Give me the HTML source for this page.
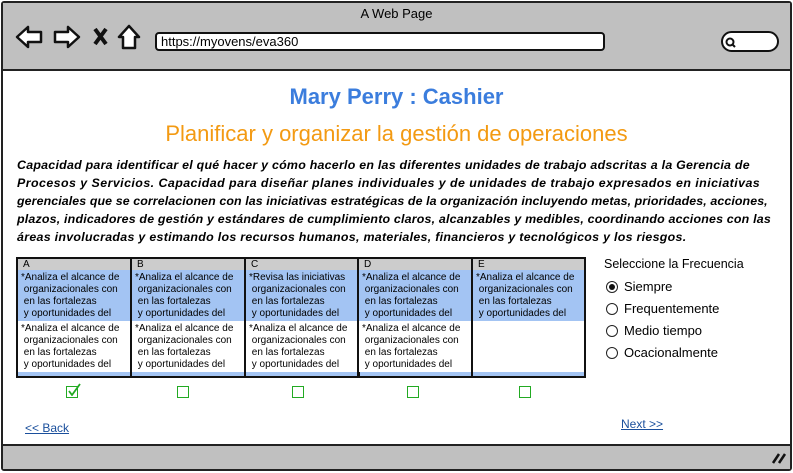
<!DOCTYPE html>
<html><head><meta charset="utf-8"><style>
*{margin:0;padding:0;box-sizing:border-box}
body{width:793px;height:473px;position:relative;background:#fff;font-family:"Liberation Sans",sans-serif;overflow:hidden}
.abs{position:absolute}
#frame{left:1px;top:1px;width:791px;height:470px;border:2px solid #222;border-radius:3px;background:#fff}
#top{left:3px;top:3px;width:787px;height:68px;background:#c0c0c0;border-bottom:2px solid #222}
#bot{left:3px;top:444px;width:787px;height:25px;background:#c0c0c0;border-top:2px solid #222}
.col{position:absolute;top:257px;height:121px;border:2px solid #111}
.hd{height:11px;background:#ccc;font-size:10px;padding-left:5px;line-height:11px}
.bl{background:#a3c4f3}
.cell{height:51px;font-size:10px;line-height:12px;padding:2px 0 0 3px;white-space:pre}
.cb{position:absolute;top:386px;width:12px;height:12px;border:1.5px solid #2a2}
.rad{position:absolute;left:606px;width:12px;height:12px;border:1.3px solid #222;border-radius:50%}
.rl{position:absolute;left:624px;font-size:13px}
.p div{white-space:nowrap;height:18px}
</style></head><body>
<div id="frame" class="abs"></div>
<div id="top" class="abs"></div>
<div class="abs" style="left:0;width:793px;top:6px;text-align:center;font-size:13px">A Web Page</div>
<svg class="abs" style="left:14px;top:22px" width="135" height="30" viewBox="0 0 135 30">
<path d="M3 15 L14 5 L14 10 L27 10 L27 20 L14 20 L14 25 Z" fill="#fff" stroke="#111" stroke-width="2.5" stroke-linejoin="round"/>
<path d="M65 15 L54 5 L54 10 L41 10 L41 20 L54 20 L54 25 Z" fill="#fff" stroke="#111" stroke-width="2.5" stroke-linejoin="round"/>
<path d="M81 7 L92 22 M92 7 L81 22" stroke="#111" stroke-width="4"/>
<path d="M115 4 L105 15 L109 15 L109 26 L121 26 L121 15 L125 15 Z" fill="#fff" stroke="#111" stroke-width="2.5" stroke-linejoin="round"/>
</svg>
<div class="abs" style="left:155px;top:32px;width:450px;height:19px;background:#fff;border:2px solid #111;border-radius:4px;font-size:13px;padding-left:4px;line-height:15px">https://myovens/eva360</div>
<div class="abs" style="left:721px;top:31px;width:58px;height:21px;background:#fff;border:2px solid #111;border-radius:11px"></div>
<svg class="abs" style="left:724px;top:36px" width="14" height="12"><circle cx="6" cy="6" r="3.5" fill="none" stroke="#111" stroke-width="2"/><path d="M8 8 L11 11" stroke="#111" stroke-width="2"/></svg>
<div class="abs" style="left:0;width:793px;top:84px;text-align:center;font-size:22px;font-weight:bold;color:#3b7ddd">Mary Perry : Cashier</div>
<div class="abs" style="left:0;width:793px;top:121px;text-align:center;font-size:22px;color:#f39a12">Planificar y organizar la gestión de operaciones</div>
<div class="abs p" style="left:17px;top:156px;width:770px;font-size:12.4px;font-weight:bold;font-style:italic;line-height:18px">
<div style="letter-spacing:0.25px">Capacidad para identificar el qué hacer y cómo hacerlo en las diferentes unidades de trabajo adscritas a la Gerencia de</div>
<div style="letter-spacing:0.45px">Procesos y Servicios. Capacidad para diseñar planes individuales y de unidades de trabajo expresados en iniciativas</div>
<div style="letter-spacing:0.1px">gerenciales que se correlacionen con las iniciativas estratégicas de la organización incluyendo metas, prioridades, acciones,</div>
<div style="letter-spacing:0.2px">plazos, indicadores de gestión y estándares de cumplimiento claros, alcanzables y medibles, coordinando acciones con las</div>
<div style="letter-spacing:0.3px">áreas involucradas y estimando los recursos humanos, materiales, financieros y tecnológicos y los riesgos.</div>
</div>
<div class="abs bl" style="left:16px;top:257px;width:570px;height:121px;border:2px solid #111"></div>
<div class="col" style="left:16px;width:116px"><div class="hd">A</div><div class="cell bl">*Analiza el alcance de
 organizacionales con
 en las fortalezas
 y oportunidades del</div><div class="cell" style="background:#fff">*Analiza el alcance de
 organizacionales con
 en las fortalezas
 y oportunidades del</div></div>
<div class="col" style="left:130px;width:116px"><div class="hd">B</div><div class="cell bl">*Analiza el alcance de
 organizacionales con
 en las fortalezas
 y oportunidades del</div><div class="cell" style="background:#fff">*Analiza el alcance de
 organizacionales con
 en las fortalezas
 y oportunidades del</div></div>
<div class="col" style="left:244px;width:116px"><div class="hd">C</div><div class="cell bl">*Revisa las iniciativas
 organizacionales con
 en las fortalezas
 y oportunidades del</div><div class="cell" style="background:#fff">*Analiza el alcance de
 organizacionales con
 en las fortalezas
 y oportunidades del</div></div>
<div class="col" style="left:357px;width:116px"><div class="hd">D</div><div class="cell bl">*Analiza el alcance de
 organizacionales con
 en las fortalezas
 y oportunidades del</div><div class="cell" style="background:#fff">*Analiza el alcance de
 organizacionales con
 en las fortalezas
 y oportunidades del</div></div>
<div class="col" style="left:471px;width:115px"><div class="hd">E</div><div class="cell bl">*Analiza el alcance de
 organizacionales con
 en las fortalezas
 y oportunidades del</div><div class="cell" style="background:#fff"></div></div>
<div class="cb" style="left:66px"></div>
<svg class="abs" style="left:66px;top:382px" width="16" height="14"><path d="M3 9 L6 13 L14 2" fill="none" stroke="#2a2" stroke-width="1.8"/></svg>
<div class="cb" style="left:177px"></div>
<div class="cb" style="left:292px"></div>
<div class="cb" style="left:407px"></div>
<div class="cb" style="left:519px"></div>
<div class="abs" style="left:604px;top:257px;font-size:12.5px">Seleccione la Frecuencia</div>
<div class="rad" style="top:281px"></div><div class="abs" style="left:609px;top:284px;width:6px;height:6px;border-radius:50%;background:#111"></div>
<div class="rl" style="top:279px">Siempre</div>
<div class="rad" style="top:303px"></div><div class="rl" style="top:301px">Frequentemente</div>
<div class="rad" style="top:325px"></div><div class="rl" style="top:323px">Medio tiempo</div>
<div class="rad" style="top:347px"></div><div class="rl" style="top:345px">Ocacionalmente</div>
<div class="abs" style="left:25px;top:421px;font-size:12px;color:#1a4f9c;text-decoration:underline">&lt;&lt; Back</div>
<div class="abs" style="left:621px;top:417px;font-size:12px;color:#1a4f9c;text-decoration:underline">Next &gt;&gt;</div>
<div id="bot" class="abs"></div>
<svg class="abs" style="left:770px;top:450px" width="18" height="16"><path d="M3 13 L9 4 M9 13 L15 4" stroke="#111" stroke-width="2.5"/></svg>
</body></html>
